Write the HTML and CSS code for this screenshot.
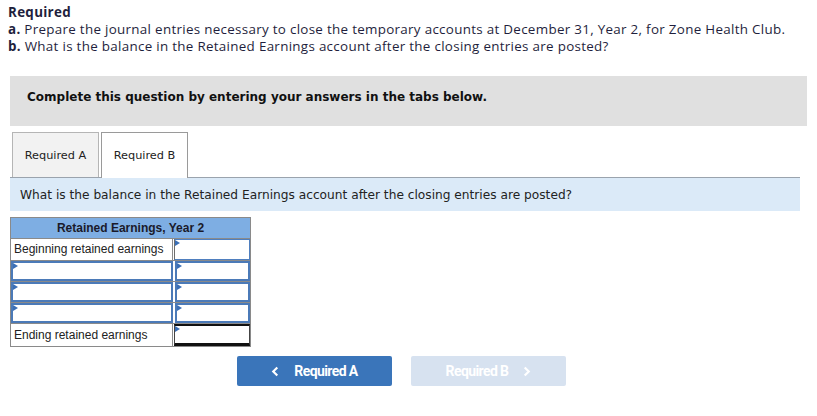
FILE: index.html
```html
<!DOCTYPE html>
<html>
<head>
<meta charset="utf-8">
<link rel="stylesheet" href="styles.css">
</head>
<body>
<div class="page">
  <div class="req">
    <div class="req-title">Required</div>
    <div class="req-line"><b>a.</b> Prepare the journal entries necessary to close the temporary accounts at December 31, Year 2, for Zone Health Club.</div>
    <div class="req-line"><b>b.</b> What is the balance in the Retained Earnings account after the closing entries are posted?</div>
  </div>

  <div class="notice">Complete this question by entering your answers in the tabs below.</div>

  <div class="tabs">
    <div class="tab">Required A</div>
    <div class="tab active">Required B</div>
  </div>
  <div class="prompt">What is the balance in the Retained Earnings account after the closing entries are posted?</div>

  <div class="ledger">
    <div class="ledger-head">Retained Earnings, Year 2</div>
    <div class="row">
      <div class="label">Beginning retained earnings</div>
      <div class="amt"><span class="mark"></span></div>
    </div>
    <div class="row edit">
      <div class="label"><span class="mark"></span></div>
      <div class="amt"><span class="mark"></span></div>
    </div>
    <div class="row edit">
      <div class="label"><span class="mark"></span></div>
      <div class="amt"><span class="mark"></span></div>
    </div>
    <div class="row edit">
      <div class="label"><span class="mark"></span></div>
      <div class="amt"><span class="mark"></span></div>
    </div>
    <div class="row total">
      <div class="label">Ending retained earnings</div>
      <div class="amt"><span class="mark"></span></div>
    </div>
  </div>

  <div class="nav">
    <div class="btn prev"><svg class="chev" viewBox="0 0 10 12" width="9" height="11"><path d="M7 1.5 L2.5 6 L7 10.5" fill="none" stroke="#fff" stroke-width="2.4"/></svg>Required A</div>
    <div class="btn next disabled">Required B<svg class="chev" viewBox="0 0 10 12" width="9" height="11"><path d="M3 1.5 L7.5 6 L3 10.5" fill="none" stroke="#fff" stroke-width="2.4"/></svg></div>
  </div>
</div>
</body>
</html>
```

FILE: styles.css
```css
* { box-sizing: border-box; }
body { margin: 0; background: #fff; }
.page { padding: 4px 8px 0 8px; }

.req { font-family: "Open Sans", "Liberation Sans", sans-serif; font-size: 13.4px; letter-spacing: 0.3px; color: #1f1f3d; line-height: 17px; }
.req-title { font-weight: 700; }
.req-line b { font-weight: 700; }

.notice {
  margin: 21px 2px 0 2px;
  height: 50px;
  background: #e0e0e0;
  font-family: "DejaVu Sans", Verdana, sans-serif;
  font-weight: 700;
  font-size: 12px;
  color: #111;
  padding: 14px 0 0 17px;
}

.tabs { display: flex; margin: 6px 0 0 4px; height: 45px; align-items: flex-end; }
.tab {
  width: 87px; height: 45px;
  border: 1px solid #b5b5b5; border-bottom: none;
  background: #f2f2f2;
  font-family: "DejaVu Sans", Verdana, sans-serif; font-size: 11.3px; color: #222;
  display: flex; align-items: center; justify-content: center;
}
.tab.active { background: #fff; margin-left: 2px; border-color: #9a9a9a; height: 46px; position: relative; top: 1px; }

.prompt {
  margin: 0 9px 0 2px;
  height: 34px;
  background: #dbeaf8;
  border-top: 1px solid #9aa3ad;
  font-family: "DejaVu Sans", Verdana, sans-serif; font-size: 12.2px; color: #222;
  padding: 10px 0 0 10px;
}

.ledger { margin: 6px 0 0 2px; width: 241px; font-family: "Liberation Sans", Arial, sans-serif; font-size: 12px; color: #222; border: 1px solid #8a8a8a; }
.ledger-head { background: #7eaee3; height: 21px; line-height: 21px; text-align: center; font-weight: 700; border-bottom: 1px solid #8a8a8a; color: #1a1a2a; }
.row { display: flex; height: 21px; }
.row + .row { border-top: 1px solid #8a8a8a; }
.label { width: 162px; padding: 3px 0 0 3px; position: relative; border-right: 1px solid #8a8a8a; background: #fff; }
.amt { flex: 1; position: relative; background: #fff; }
.row .amt { border: 1px solid #4f7fbf; border-left: 1px solid #6d6d6d; margin: 0 0 0 1px; }
.row.edit .label { border: 2px solid #4b7ab8; margin-right: 1px; }
.row.edit .amt { border: 2px solid #4b7ab8; }
.row.total { height: 23px; }
.row.total .label { padding-top: 4px; }
.row.total .amt { border-top: 2px solid #111; border-bottom: 3px solid #111; border-left: 1px solid #444; border-right: 1px solid #444; }

.mark { position: absolute; left: 0; top: 0; width: 0; height: 0; border-top: 3px solid transparent; border-bottom: 3px solid transparent; border-left: 5px solid #3b6fb6; }

.nav { display: flex; gap: 19px; margin: 9px 0 0 229px; }
.btn {
  width: 155px; height: 30px; border-radius: 2px;
  font-family: Roboto, "Liberation Sans", sans-serif; font-weight: 700; font-size: 14px; letter-spacing: -0.6px;
  color: #fff; display: flex; align-items: center; justify-content: center; gap: 14px;
}
.btn.prev { background: #3a75ba; }
.btn.disabled { background: #d7e2f0; }
.chev { display: block; }
```
